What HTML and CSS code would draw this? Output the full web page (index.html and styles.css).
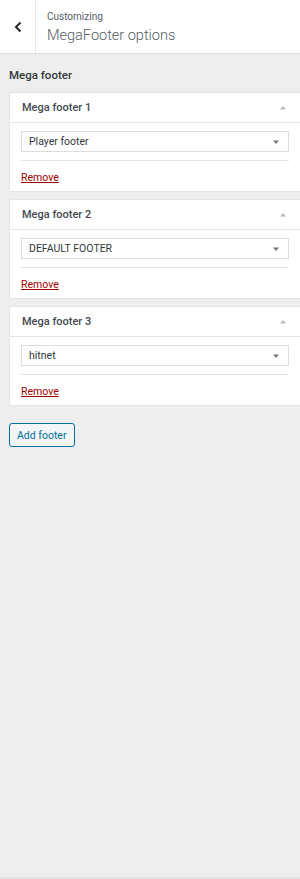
FILE: index.html
```html
<!DOCTYPE html>
<html lang="en">
<head>
    <meta charset="UTF-8">
    <meta name="viewport" content="width=device-width, initial-scale=1.0">
    <title>MegaFooter options</title>
    <link rel="stylesheet" href="styles.css">
</head>
<body>
    <div class="panel-header">
        <button class="back-btn" aria-label="Back">
            <svg width="8" height="12" viewBox="0 0 8 12"><path d="M6.5 1.5 L2 6 L6.5 10.5" fill="none" stroke="#23282d" stroke-width="2"/></svg>
        </button>
        <div class="panel-title">
            <span class="crumb">Customizing</span>
            <span class="title">MegaFooter options</span>
        </div>
    </div>

    <div class="panel-body">
        <h3 class="section-title">Mega footer</h3>

        <div class="repeater-item">
            <div class="item-head">
                <span>Mega footer 1</span>
                <svg class="toggle" width="6" height="4" viewBox="0 0 6 4"><path d="M0 3.5 L3 0 L6 3.5 Z"/></svg>
            </div>
            <div class="item-body">
                <div class="select"><span>Player footer</span><svg class="caret" width="6" height="4" viewBox="0 0 6 4"><path d="M0 0.5 L6 0.5 L3 4 Z"/></svg></div>
                <div class="item-actions"><a href="#" class="remove">Remove</a></div>
            </div>
        </div>

        <div class="repeater-item">
            <div class="item-head">
                <span>Mega footer 2</span>
                <svg class="toggle" width="6" height="4" viewBox="0 0 6 4"><path d="M0 3.5 L3 0 L6 3.5 Z"/></svg>
            </div>
            <div class="item-body">
                <div class="select"><span>DEFAULT FOOTER</span><svg class="caret" width="6" height="4" viewBox="0 0 6 4"><path d="M0 0.5 L6 0.5 L3 4 Z"/></svg></div>
                <div class="item-actions"><a href="#" class="remove">Remove</a></div>
            </div>
        </div>

        <div class="repeater-item">
            <div class="item-head">
                <span>Mega footer 3</span>
                <svg class="toggle" width="6" height="4" viewBox="0 0 6 4"><path d="M0 3.5 L3 0 L6 3.5 Z"/></svg>
            </div>
            <div class="item-body">
                <div class="select"><span>hitnet</span><svg class="caret" width="6" height="4" viewBox="0 0 6 4"><path d="M0 0.5 L6 0.5 L3 4 Z"/></svg></div>
                <div class="item-actions"><a href="#" class="remove">Remove</a></div>
            </div>
        </div>

        <button class="add-btn">Add footer</button>
    </div>
</body>
</html>
```

FILE: styles.css
```css
html, body {
    height: 100%;
}

body {
    margin: 0;
    font-family: Roboto, 'Liberation Sans', sans-serif;
    background: #eeeeee;
    color: #23282d;
    box-sizing: border-box;
    border-bottom: 2px solid #e2e2e2;
}

.panel-header {
    display: flex;
    height: 53px;
    background: #ffffff;
    border-bottom: 1px solid #dddddd;
}

.back-btn {
    width: 36px;
    padding: 0;
    border: none;
    border-right: 1px solid #e5e5e5;
    background: #ffffff;
    display: flex;
    align-items: center;
    justify-content: center;
}

.panel-title {
    display: flex;
    flex-direction: column;
    padding: 10px 0 0 11px;
}

.crumb {
    font-size: 10px;
    color: #555d66;
    line-height: 13px;
}

.title {
    font-size: 14.5px;
    font-weight: 300;
    color: #555d66;
    line-height: 20px;
    margin-top: 3px;
}

.panel-body {
    padding: 13px 0 0 9px;
}

.section-title {
    margin: 0 0 9px;
    font-size: 11.5px;
    font-weight: 500;
    line-height: 16px;
    color: #32373c;
}

.repeater-item {
    background: #ffffff;
    border: 1px solid #e5e5e5;
    border-right: none;
    margin-bottom: 7px;
}

.item-head {
    display: flex;
    justify-content: space-between;
    align-items: center;
    height: 29px;
    padding: 0 14px 0 12px;
    border-bottom: 1px solid #e5e5e5;
    font-size: 11px;
    font-weight: 500;
    color: #444a50;
}

.toggle {
    fill: #b4b9be;
}

.item-body {
    padding: 8px 11px 6px 11px;
}

.select {
    display: flex;
    justify-content: space-between;
    align-items: center;
    height: 21px;
    box-sizing: border-box;
    border: 1px solid #dddddd;
    padding: 0 9px 0 7px;
    font-size: 10.5px;
    color: #32373c;
}

.caret {
    fill: #72777c;
}

.item-actions {
    margin-top: 8px;
    border-top: 1px solid #e5e5e5;
    padding-top: 8px;
    line-height: 14px;
}

.remove {
    font-size: 10.5px;
    color: #a00000;
}

.add-btn {
    margin-top: 10px;
    height: 24px;
    padding: 0 7px;
    font-family: inherit;
    font-size: 10.5px;
    color: #0071a1;
    background: #f3f5f6;
    border: 1px solid #0071a1;
    border-radius: 3px;
}
```
